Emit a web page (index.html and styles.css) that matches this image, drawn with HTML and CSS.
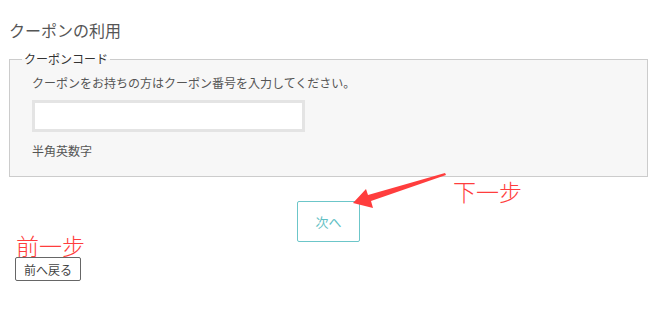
FILE: index.html
```html
<!DOCTYPE html>
<html>
<head>
	<meta charset="utf-8">
	<title>クーポンの利用</title>
	<link rel="stylesheet" href="styles.css">
</head>
<body>
	<h2 class="pageTitle">クーポンの利用</h2>
	<fieldset class="couponBox">
		<legend>クーポンコード</legend>
		<p class="hint">クーポンをお持ちの方はクーポン番号を入力してください。</p>
		<input type="text" class="couponInput" name="coupon">
		<p class="note">半角英数字</p>
	</fieldset>
	<div class="nextRow">
		<button type="button" class="nextButton">次へ</button>
	</div>
	<button type="button" class="backButton">前へ戻る</button>

	<!-- annotations -->
	<span class="mark markNext">下一步</span>
	<span class="mark markBack">前一步</span>
	<svg class="arrow" width="657" height="318" viewBox="0 0 657 318">
		<polygon points="353,203 366,189 368,195 445,173 446,175 371,201 373,208" fill="#ff3d3d"/>
	</svg>
</body>
</html>
```
FILE: styles.css
```css
body {
	margin: 0;
	padding: 0 9px;
	font-family: "Noto Sans CJK JP", "Noto Sans", sans-serif;
	color: #555;
	background-color: white;
	position: relative;
	height: 318px;
	box-sizing: border-box;
	overflow: hidden;
}
h2.pageTitle {
	margin: 0;
	padding-top: 20px;
	font-size: 16px;
	line-height: 20px;
	font-weight: normal;
	color: #555;
}
fieldset.couponBox {
	margin: 10px 0 0 0;
	padding: 6px 22px 16px 22px;
	border: 1px solid #ccc;
	background-color: #f7f7f7;
}
fieldset.couponBox legend {
	margin-left: -10px;
	padding: 0 2px;
	font-size: 12px;
	line-height: 18px;
	color: #333;
}
p.hint {
	margin: 0;
	font-size: 12px;
	line-height: 18px;
}
input.couponInput {
	display: block;
	box-sizing: border-box;
	width: 273px;
	height: 32px;
	margin-top: 8px;
	border: 3px solid #e4e4e4;
	background-color: white;
	outline: none;
}
p.note {
	margin: 10px 0 0 0;
	font-size: 12px;
	line-height: 18px;
}
.nextRow {
	display: flex;
	justify-content: center;
	margin-top: 24px;
}
button.nextButton {
	box-sizing: border-box;
	width: 63px;
	height: 41px;
	border: 1px solid #6cc6c9;
	border-radius: 2px;
	background-color: white;
	color: #5fc0c4;
	font-family: "Noto Sans CJK JP", sans-serif;
	font-size: 13px;
}
button.backButton {
	display: block;
	box-sizing: border-box;
	width: 66px;
	height: 24px;
	margin: 15px 0 0 6px;
	padding: 0;
	border: 1px solid #666;
	border-radius: 2px;
	background-color: white;
	color: #444;
	font-family: "Noto Sans CJK JP", sans-serif;
	font-size: 12px;
}
.mark {
	position: absolute;
	color: #ff3d3d;
	font-family: "Noto Sans CJK SC", sans-serif;
	font-weight: 300;
	font-size: 23px;
	line-height: 23px;
}
.markNext {
	left: 453px;
	top: 180px;
}
.markBack {
	left: 16px;
	top: 234px;
}
svg.arrow {
	position: absolute;
	left: 0;
	top: 0;
	pointer-events: none;
}
```
